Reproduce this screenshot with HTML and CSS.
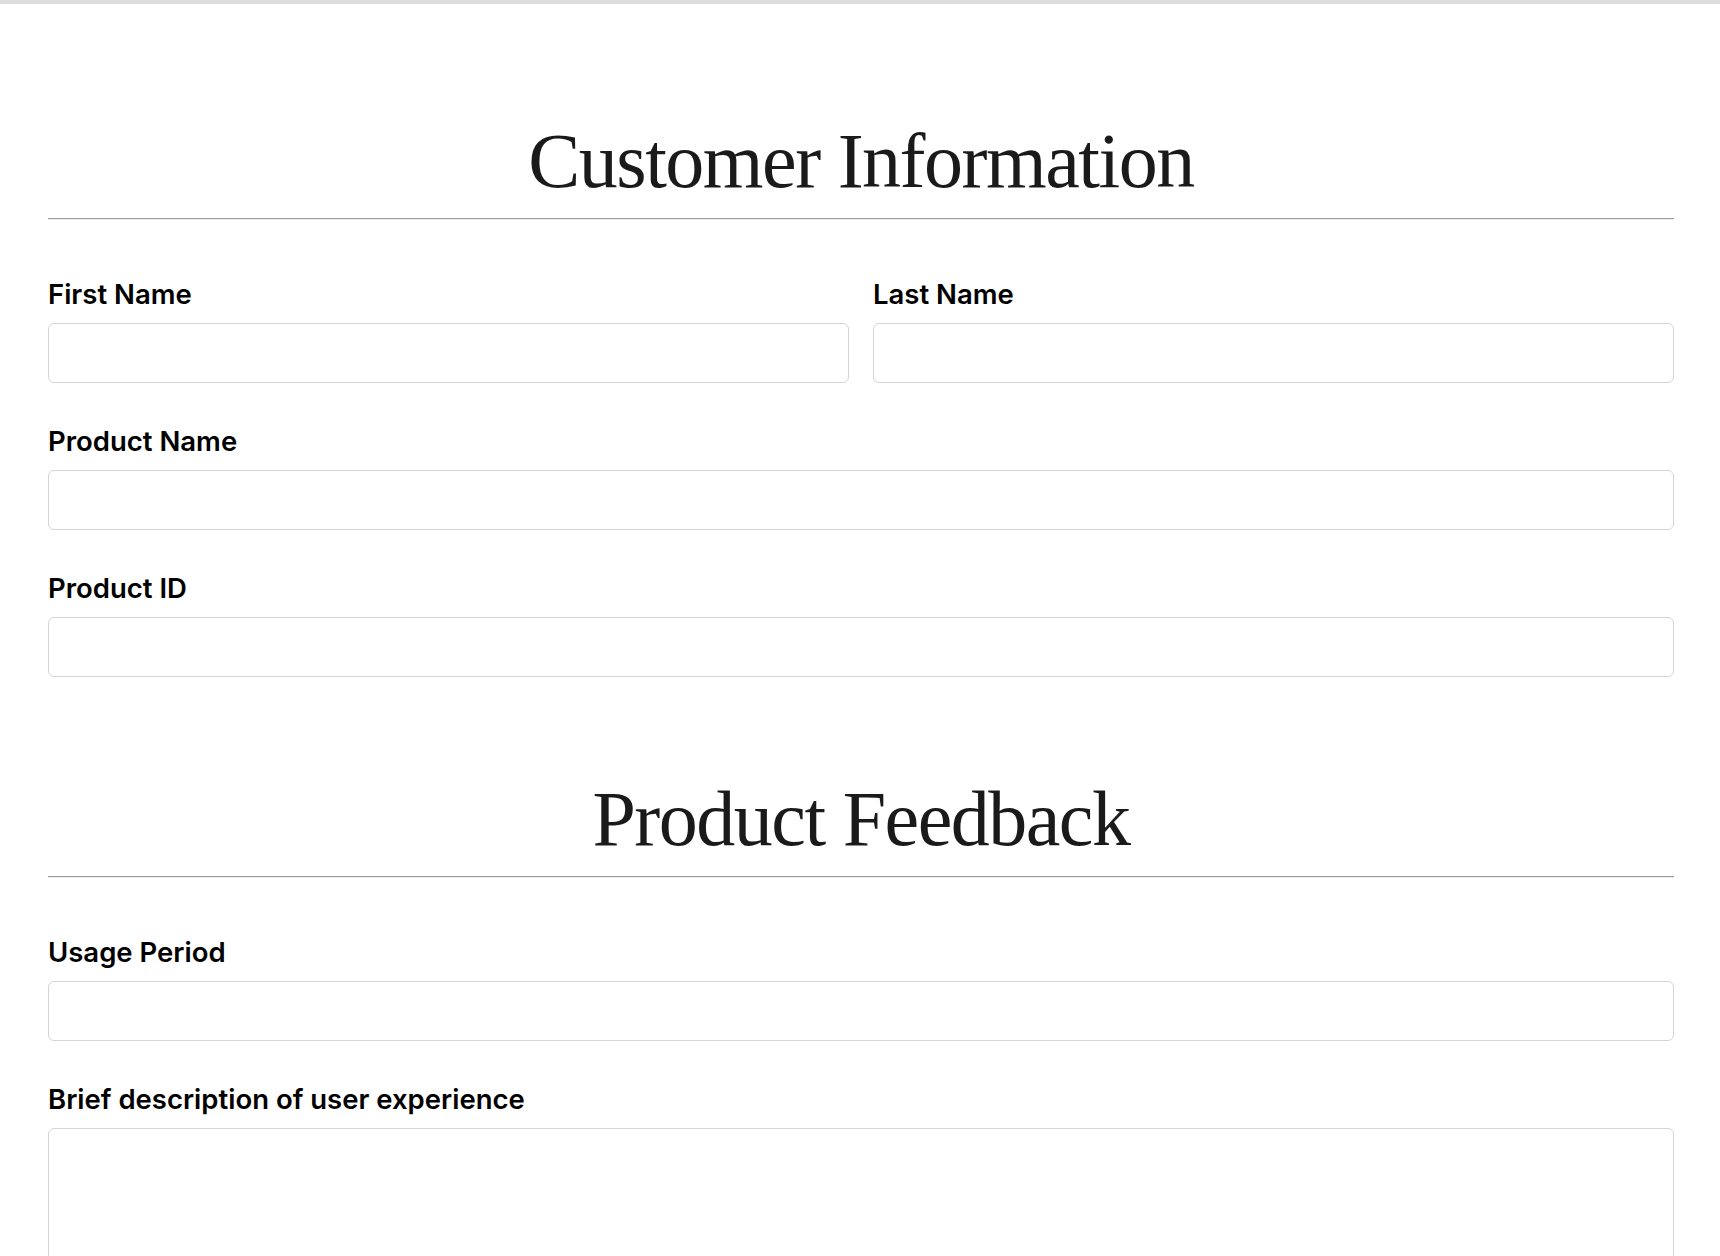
FILE: index.html
```html
<!DOCTYPE html>
<html lang="en">
<head>
<meta charset="utf-8">
<title>Product Feedback Form</title>
<link rel="stylesheet" href="styles.css">
</head>
<body>
<div class="topbar"></div>
<form class="form">
  <section class="section">
    <h2 class="section-title">Customer Information</h2>
    <hr class="rule">
    <div class="fields">
      <div class="row-2">
        <div class="field">
          <label class="label" for="first">First Name</label>
          <input class="input" id="first" type="text">
        </div>
        <div class="field">
          <label class="label" for="last">Last Name</label>
          <input class="input" id="last" type="text">
        </div>
      </div>
      <div class="field">
        <label class="label" for="pname">Product Name</label>
        <input class="input" id="pname" type="text">
      </div>
      <div class="field">
        <label class="label" for="pid">Product ID</label>
        <input class="input" id="pid" type="text">
      </div>
    </div>
  </section>
  <section class="section section-next">
    <h2 class="section-title">Product Feedback</h2>
    <hr class="rule">
    <div class="fields">
      <div class="field">
        <label class="label" for="period">Usage Period</label>
        <input class="input" id="period" type="text">
      </div>
      <div class="field">
        <label class="label" for="desc">Brief description of user experience</label>
        <textarea class="input textarea" id="desc"></textarea>
      </div>
    </div>
  </section>
</form>
</body>
</html>
```
FILE: styles.css
```css
html, body {
  margin: 0;
  padding: 0;
  background: #ffffff;
}

body {
  font-family: Inter, "Noto Sans", "Liberation Sans", sans-serif;
  color: #000;
}

.topbar {
  height: 4px;
  background: #dddddd;
}

.form {
  padding: 110px 46px 0 48px;
}

.section-next {
  margin-top: 95px;
}

.section-title {
  margin: 0;
  text-align: center;
  font-family: "Liberation Serif", "DejaVu Serif", serif;
  font-weight: normal;
  font-size: 78px;
  line-height: 94px;
  letter-spacing: -1.5px;
  color: #1a1a1a;
}

.rule {
  margin: 10px 0 0;
  height: 0;
  border: none;
  border-top: 1px solid #9a9a9a;
  border-bottom: 1px solid #eeeeee;
}

.fields {
  display: flex;
  flex-direction: column;
  gap: 40px;
  margin-top: 56px;
}

.row-2 {
  display: grid;
  grid-template-columns: 1fr 1fr;
  gap: 24px;
}

.field {
  display: flex;
  flex-direction: column;
}

.label {
  font-size: 27.5px;
  line-height: 36px;
  font-weight: 600;
  margin-bottom: 11px;
}

.input {
  box-sizing: border-box;
  height: 60px;
  width: 100%;
  border: 1px solid #d1d5db;
  border-radius: 6px;
  background: #fff;
  padding: 0 16px;
  font: inherit;
  font-size: 20px;
  outline: none;
}

.textarea {
  height: 220px;
  resize: none;
  padding: 12px 16px;
}
```
